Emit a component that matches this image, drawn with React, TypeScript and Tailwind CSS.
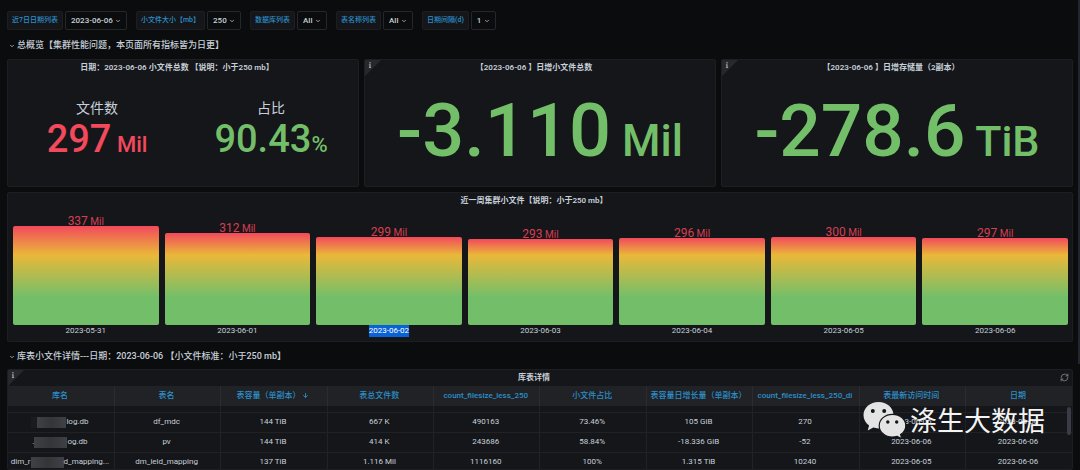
import { ReactNode } from "react";
import { ArrowDown, ChevronDown, RefreshCw } from "lucide-react";
import { FaInfo } from "react-icons/fa";

const variables = [
  { id: "day", label: "近7日日期列表", value: "2023-06-06" },
  { id: "size", label: "小文件大小【mb】", value: "250" },
  { id: "db", label: "数据库列表", value: "All" },
  { id: "table", label: "表名称列表", value: "All" },
  { id: "interval", label: "日期间隔(d)", value: "1" },
];

const week = [
  { date: "2023-05-31", value: 337 },
  { date: "2023-06-01", value: 312 },
  { date: "2023-06-02", value: 299, selected: true },
  { date: "2023-06-03", value: 293 },
  { date: "2023-06-04", value: 296 },
  { date: "2023-06-05", value: 300 },
  { date: "2023-06-06", value: 297 },
];

const columns = [
  "库名",
  "表名",
  "表容量（单副本）",
  "表总文件数",
  "count_filesize_less_250",
  "小文件占比",
  "表容量日增长量（单副本）",
  "count_filesize_less_250_di",
  "表最新访问时间",
  "日期",
];

const rows = [
  ["df_mdc", "144 TiB", "667 K", "490163", "73.46%", "105 GiB", "270", "2023-06-06", "2023-06-06"],
  ["pv", "144 TiB", "414 K", "243686", "58.84%", "-18.336 GiB", "-52", "2023-06-06", "2023-06-06"],
  ["dm_ieid_mapping", "137 TiB", "1.116 Mil", "1116160", "100%", "1.315 TiB", "10240", "2023-06-05", "2023-06-06"],
];

function Mask({ className }: { className: string }) {
  return (
    <span
      className={`inline-block h-[11px] shrink-0 bg-linear-to-r from-[#404145] via-[#343539] to-[#404145] ${className}`}
    />
  );
}

const names: ReactNode[] = [
  <>
    <span className="h-[11px] w-[6px] bg-[#1a1b1e]" />
    <Mask className="w-[29px]" />
    <span>log.db</span>
  </>,
  <>
    <span>.</span>
    <Mask className="w-[33px]" />
    <span>og.db</span>
  </>,
  <>
    <span>dim_r</span>
    <Mask className="w-[33px]" />
    <span>d_mapping...</span>
  </>,
];

function Panel({
  title,
  info = false,
  className = "",
  children,
}: {
  title: string;
  info?: boolean;
  className?: string;
  children: ReactNode;
}) {
  return (
    <section
      className={`relative flex flex-col rounded-[2px] border border-[#1c1e21] bg-[#151619] ${className}`}
    >
      {info && (
        <span className="absolute top-0 left-0 h-4 w-4 bg-[#26282c] [clip-path:polygon(0_0,100%_0,0_100%)]">
          <FaInfo className="absolute top-[2px] left-[2px] text-[#9a9ca0]" size={6} />
        </span>
      )}
      <h2 className="h-4 shrink-0 pr-3 text-center text-[8px] leading-4 font-semibold">{title}</h2>
      {children}
    </section>
  );
}

function SectionHeader({ children, className }: { children: ReactNode; className: string }) {
  return (
    <button
      type="button"
      className={`flex shrink-0 items-center gap-[2px] pt-[2px] pl-[2px] text-[9px] font-medium ${className}`}
    >
      <ChevronDown size={6} strokeWidth={3} />
      {children}
    </button>
  );
}

function Stat({ label, value, unit, className }: { label: string; value: string; unit: string; className: string }) {
  return (
    <div className="flex flex-col items-center">
      <div className="text-[14px] leading-4">{label}</div>
      <div className={`flex items-baseline text-[38px] leading-[46px] font-medium whitespace-pre ${className}`}>
        <span>{value}</span>
        <span className="text-[22px] leading-none">{unit}</span>
      </div>
    </div>
  );
}

function WechatLogo() {
  return (
    <svg viewBox="0 0 44 38" className="h-[38px] w-[44px]" aria-hidden="true">
      <path
        fill="#e4e4e4"
        d="M15.500 1C7.200 1 .5 6.900.5 14.200c0 4.200 2.200 7.900 5.600 10.300L4.700 29.500l5.600-2.900c1.600.5 3.400.8 5.200.8 8.300 0 15-5.900 15-13.200S23.800 1 15.500 1z"
      />
      <circle cx="9.800" cy="10" r="2" fill="#151619" />
      <circle cx="21.200" cy="10" r="2" fill="#151619" />
      <path
        fill="#e4e4e4"
        stroke="#151619"
        strokeWidth="1.200"
        d="M29.500 13.300c-7.400 0-13.300 5.100-13.300 11.400s5.900 11.400 13.300 11.400c1.700 0 3.200-.3 4.700-.8l4.600 2.400-1.200-4.100c3.200-2.100 5.200-5.300 5.200-8.900 0-6.300-5.900-11.400-13.300-11.400z"
      />
      <circle cx="24.800" cy="21" r="1.700" fill="#151619" />
      <circle cx="33.700" cy="21" r="1.700" fill="#151619" />
    </svg>
  );
}

export default function App() {
  const peak = Math.max(...week.map((d) => d.value));

  return (
    <main className="relative flex h-screen flex-col overflow-hidden bg-[#0b0c0e] px-[7px] pt-[11px] font-['Roboto','Noto_Sans_CJK_SC',sans-serif] text-[8px] text-[#c7d0d9]">
      <form className="flex shrink-0 gap-[9px]">
        {variables.map((v) => (
          <div key={v.id} className="flex gap-[2px]">
            <label
              htmlFor={v.id}
              className="flex h-[19px] items-center rounded-[2px] border border-[#1c1e21] bg-[#141619] px-1 text-[7px] font-medium whitespace-nowrap text-[#2d8fc9]"
            >
              {v.label}
            </label>
            <div className="relative">
              <select
                id={v.id}
                defaultValue={v.value}
                className="h-[19px] appearance-none rounded-[2px] border border-[#25272b] bg-[#0b0c0e] pr-[13px] pl-[5px] text-[8px] font-medium"
              >
                <option>{v.value}</option>
              </select>
              <ChevronDown
                size={6}
                strokeWidth={3}
                className="pointer-events-none absolute top-[7px] right-[6px]"
              />
            </div>
          </div>
        ))}
      </form>

      <SectionHeader className="h-[29px]">总概览【集群性能问题，本页面所有指标皆为日更】</SectionHeader>

      <div className="grid shrink-0 grid-cols-3 gap-[5px]">
        <Panel title="日期：2023-06-06 小文件总数 【说明：小于250 mb】">
          <div className="grid grid-cols-2 pt-6 pl-[2px]">
            <Stat label="文件数" value="297" unit=" Mil" className="text-[#f2495c]" />
            <Stat label="占比" value="90.43" unit="%" className="text-[#73bf69]" />
          </div>
        </Panel>
        <Panel title="【2023-06-06 】日增小文件总数" info>
          <div className="flex h-[110px] items-center justify-center text-[74px] leading-none font-medium text-[#73bf69]">
            <div className="whitespace-nowrap">
              -3.110<span className="text-[44px]"> Mil</span>
            </div>
          </div>
        </Panel>
        <Panel title="【2023-06-06 】日增存储量（2副本）" info>
          <div className="flex h-[110px] items-center justify-center text-[73px] leading-none font-medium text-[#73bf69]">
            <div className="whitespace-nowrap">
              -278.6<span className="text-[43px]"> TiB</span>
            </div>
          </div>
        </Panel>
      </div>

      <Panel title="近一周集群小文件【说明：小于250 mb】" className="mt-[5px] shrink-0 pb-1">
        <div className="grid grid-cols-7 gap-[6px] pr-1 pl-[5px]">
          {week.map((d) => (
            <div key={d.date} className="flex flex-col">
              <div className="flex h-[116px] flex-col justify-end">
                <div className="h-[13px] text-center text-[12px] leading-4 text-[#d63f52]">
                  {d.value}
                  <span className="text-[10px]"> Mil</span>
                </div>
                <div
                  className="rounded-[2px] bg-[linear-gradient(to_top,#73bf69_28px,#eab839_70px,#f2495c_100%)]"
                  style={{ height: `${Math.round((d.value / peak) * 99)}px` }}
                />
              </div>
              <div className="text-center text-[8px] leading-3">
                <span className={d.selected ? "inline-block bg-[#0a63d6] text-white" : "inline-block"}>{d.date}</span>
              </div>
            </div>
          ))}
        </div>
      </Panel>

      <SectionHeader className="h-[27px]">
        库表小文件详情---日期：2023-06-06 【小文件标准：小于250 mb】
      </SectionHeader>

      <Panel title="库表详情" info className="min-h-0 flex-1 overflow-hidden">
        <button type="button" aria-label="刷新" className="absolute top-[3px] right-[3px] text-[#8e9094]">
          <RefreshCw size={9} strokeWidth={2} />
        </button>
        <table className="w-full table-fixed border-collapse text-center">
          <thead>
            <tr className="h-5 bg-[#202226] text-[#2d8fc9]">
              {columns.map((c, i) => (
                <th
                  key={c}
                  className="overflow-hidden border-r border-[#2a2c30] p-0 pr-[2px] font-medium whitespace-nowrap last:border-r-0"
                >
                  {c}
                  {i === 2 && <ArrowDown size={7} strokeWidth={3} className="ml-[2px] inline-block" />}
                </th>
              ))}
            </tr>
          </thead>
          <tbody>
            <tr className="h-[6px] border-b border-[#202226]">
              {columns.map((c) => (
                <td key={c} className="border-r border-[#202226] p-0 last:border-r-0" />
              ))}
            </tr>
            {rows.map((r, i) => (
              <tr key={r[0]} className="h-5 border-b border-[#202226] last:border-b-0">
                <td className="border-r border-[#202226] p-0 pr-[2px]">
                  <div className="flex items-center justify-center whitespace-nowrap">{names[i]}</div>
                </td>
                {r.map((cell, j) => (
                  <td key={j} className="border-r border-[#202226] p-0 pr-[2px] whitespace-nowrap last:border-r-0">
                    {cell}
                  </td>
                ))}
              </tr>
            ))}
          </tbody>
        </table>
        <span className="absolute top-[37px] right-[1px] h-7 w-1 rounded-[2px] bg-[#3a3b44]" />
      </Panel>

      <div className="pointer-events-none absolute right-[35px] bottom-[29px] flex items-center gap-[3px] text-[27px] leading-[38px] text-[#f4f4f4]">
        <WechatLogo />
        <span className="pt-1">涤生大数据</span>
      </div>
      <span className="absolute top-0 right-0 h-[364px] w-[2px] bg-[#24262e]" />
    </main>
  );
}
